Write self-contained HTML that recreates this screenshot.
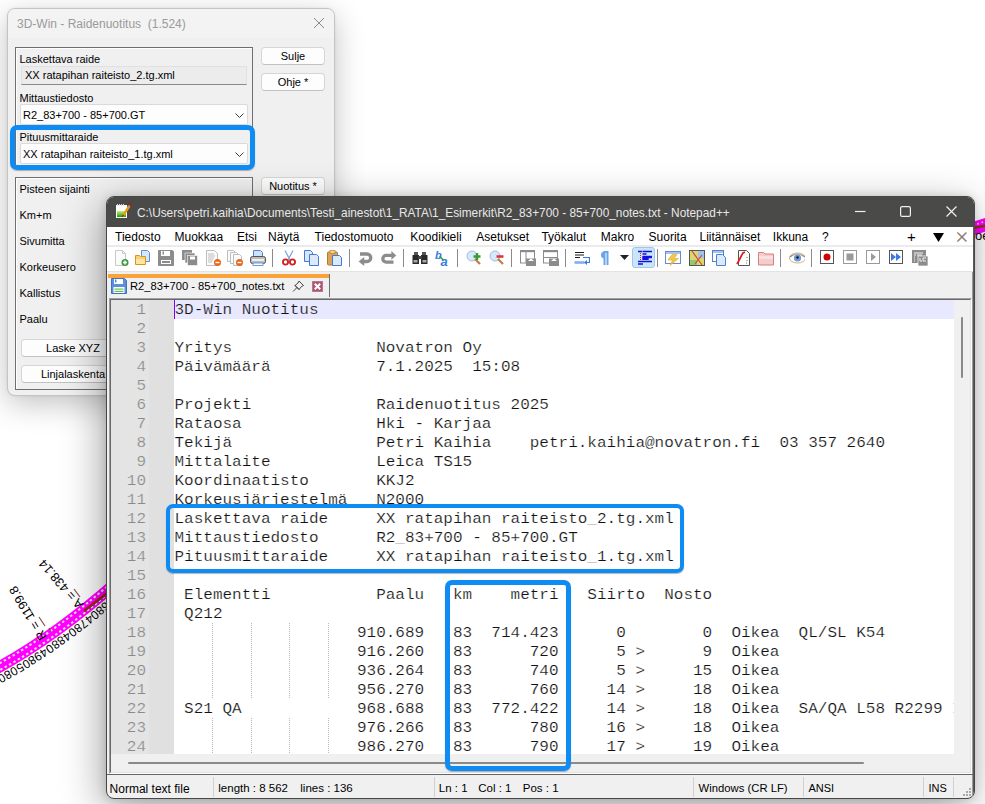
<!DOCTYPE html><html><head><meta charset="utf-8"><style>
*{box-sizing:border-box;margin:0;padding:0}
html,body{width:985px;height:804px;overflow:hidden;background:#fff}
body{position:relative;font-family:"Liberation Sans",sans-serif;}
.a{position:absolute}
.t{position:absolute;white-space:pre;line-height:1}
.mono{font-family:"Liberation Mono",monospace;transform:scaleY(0.88);transform-origin:0 12.3px}
</style></head><body><svg class="a" style="left:0;top:0" width="985" height="804" viewBox="0 0 985 804">
<defs><path id="crv" d="M118 581 Q50 641 -12 673"/></defs>
<path d="M-12 673 Q50 641 118 581" stroke="#ff00ff" stroke-width="11.5" fill="none"/>
<path d="M-12 673 Q50 641 118 581" transform="translate(-1.5,-2.6)" stroke="#fff" stroke-width="2" stroke-dasharray="2.5 2.5" fill="none" opacity="0.85"/>
<path d="M-12 673 Q50 641 118 581" transform="translate(1.5,2.6)" stroke="#fff" stroke-width="2" stroke-dasharray="2.5 2.5" stroke-dashoffset="2.5" fill="none" opacity="0.85"/>
<path d="M84 611 L110 591" stroke="#d01010" stroke-width="2.6" fill="none"/>
<path d="M85 611 L110 592" stroke="#207020" stroke-width="1" fill="none"/>
<g transform="translate(3.5,6)"><text font-family="Liberation Sans" font-size="12" fill="#000" letter-spacing="0.3"><textPath href="#crv" startOffset="0">80468047804880498050805180</textPath></text></g>
<g font-family="Liberation Sans" font-size="12.5" fill="#000">
<text transform="translate(47,637) rotate(-121)">R = 1199.8</text>
<text transform="translate(84,604) rotate(-131)">A = 438.14</text>
</g>
<path d="M39 617 L45 626 M49 628 L51 632" stroke="#8a4a4a" stroke-width="1.2"/>
<path d="M74 589 L80 597" stroke="#8a4a4a" stroke-width="1.2"/>
<path d="M970 230 Q980 226 995 222" stroke="#ff00ff" stroke-width="13" fill="none"/>
<path d="M970 230 Q980 226 995 222" transform="translate(-1,-3)" stroke="#fff" stroke-width="1.5" stroke-dasharray="1.5 3" fill="none" opacity="0.9"/>
<path d="M970 228.5 L995 224" stroke="#d01010" stroke-width="2.4" fill="none"/>
<path d="M970 228.5 L995 224" stroke="#207020" stroke-width="0.9" fill="none"/>
<text x="975" y="240" font-family="Liberation Sans" font-size="13" fill="#000">oe</text>
</svg>
<div class="a" style="left:7px;top:8px;width:328px;height:388px;border:1px solid #c4c4c4;border-radius:8px;background:#f0f0f0;box-shadow:0 8px 30px rgba(0,0,0,0.24), 0 0 3px rgba(0,0,0,0.08)"></div>
<div class="a" style="left:8px;top:9px;width:326px;height:29px;border-radius:7px 7px 0 0;background:#f3f3f3"></div>
<div class="t" style="left:17px;top:18px;font-size:12px;color:#9a9a9a">3D-Win - Raidenuotitus  (1.524)</div>
<svg class="a" style="left:313px;top:17px" width="12" height="12"><path d="M1 1L11 11M11 1L1 11" stroke="#8a8a8a" stroke-width="1"/></svg>
<div class="a" style="left:15px;top:47px;width:238px;height:121px;border:1px solid #6e6e6e;box-shadow:inset 1px 1px 0 #fff"></div>
<div class="a" style="left:15px;top:177px;width:238px;height:213px;border:1px solid #6e6e6e;box-shadow:inset 1px 1px 0 #fff"></div>
<div class="t" style="left:19.5px;top:54px;font-size:11px;color:#000">Laskettava raide</div>
<div class="a" style="left:21px;top:66px;width:226px;height:19px;background:#ececec;border:1px solid #e0e0e0;border-bottom:1px solid #8a8a8a"></div>
<div class="t" style="left:25px;top:70px;font-size:11px;color:#000">XX ratapihan raiteisto_2.tg.xml</div>
<div class="t" style="left:19.5px;top:93px;font-size:11px;color:#000">Mittaustiedosto</div>
<div class="a" style="left:20px;top:104px;width:228px;height:20.5px;background:#fdfdfd;border:1px solid #dadada;border-radius:2px"></div>
<div class="t" style="left:23px;top:109.5px;font-size:11px;color:#000">R2_83+700 - 85+700.GT</div>
<svg class="a" style="left:235px;top:112.5px" width="9" height="6"><path d="M0.5 0.5L4.5 4.5L8.5 0.5" stroke="#404040" stroke-width="1" fill="none"/></svg>
<div class="t" style="left:19.5px;top:132px;font-size:11px;color:#000">Pituusmittaraide</div>
<div class="a" style="left:20px;top:143px;width:228px;height:20.5px;background:#fdfdfd;border:1px solid #dadada;border-radius:2px"></div>
<div class="t" style="left:23px;top:148.5px;font-size:11px;color:#000">XX ratapihan raiteisto_1.tg.xml</div>
<svg class="a" style="left:235px;top:151.5px" width="9" height="6"><path d="M0.5 0.5L4.5 4.5L8.5 0.5" stroke="#404040" stroke-width="1" fill="none"/></svg>
<div class="a" style="left:261px;top:47px;width:64px;height:18px;background:#fdfdfd;border:1px solid #d6d6d6;border-bottom-color:#c2c2c2;border-radius:4px;font-size:11px;text-align:center;line-height:16px;white-space:pre">Sulje</div>
<div class="a" style="left:261px;top:73px;width:64px;height:18px;background:#fdfdfd;border:1px solid #d6d6d6;border-bottom-color:#c2c2c2;border-radius:4px;font-size:11px;text-align:center;line-height:16px;white-space:pre">Ohje *</div>
<div class="a" style="left:261px;top:177px;width:64px;height:18px;background:#fdfdfd;border:1px solid #d6d6d6;border-bottom-color:#c2c2c2;border-radius:4px;font-size:11px;text-align:center;line-height:16px;white-space:pre">Nuotitus *</div>
<div class="a" style="left:21px;top:339px;width:104px;height:18px;background:#fdfdfd;border:1px solid #d6d6d6;border-bottom-color:#c2c2c2;border-radius:4px;font-size:11px;text-align:center;line-height:16px;white-space:pre">Laske XYZ</div>
<div class="a" style="left:21px;top:365px;width:104px;height:18px;background:#fdfdfd;border:1px solid #d6d6d6;border-bottom-color:#c2c2c2;border-radius:4px;font-size:11px;text-align:center;line-height:16px;white-space:pre">Linjalaskenta</div>
<div class="t" style="left:19.5px;top:184px;font-size:11px;color:#000">Pisteen sijainti</div>
<div class="t" style="left:19.5px;top:210px;font-size:11px;color:#000">Km+m</div>
<div class="t" style="left:19.5px;top:236px;font-size:11px;color:#000">Sivumitta</div>
<div class="t" style="left:19.5px;top:262px;font-size:11px;color:#000">Korkeusero</div>
<div class="t" style="left:19.5px;top:288px;font-size:11px;color:#000">Kallistus</div>
<div class="t" style="left:19.5px;top:314px;font-size:11px;color:#000">Paalu</div>
<div class="a" style="left:10px;top:125px;width:245px;height:45px;border:5px solid #0f8cf4;border-radius:7px;box-shadow:0 1px 1px rgba(80,40,20,0.35)"></div>
<div class="a" style="left:106px;top:196px;width:869px;height:603px;border-radius:8px;background:#f0f0f0;border:1px solid #474747;box-shadow:-4px 10px 40px rgba(0,0,0,0.36), -1px 0 8px rgba(0,0,0,0.12);overflow:hidden">
<div class="a" style="left:0;top:0;width:100%;height:30px;background:#4a4a48"></div>
<div class="a" style="left:865px;top:30px;width:2px;height:570px;background:linear-gradient(90deg,#9a9a9a 50%,#5a5a5a 50%)"></div>
</div>
<svg class="a" style="left:115px;top:203px" width="17" height="16" viewBox="0 0 17 16">
<defs><linearGradient id="gg" x1="0" y1="0" x2="0" y2="1"><stop offset="0" stop-color="#c8f070"/><stop offset="1" stop-color="#1a9a1a"/></linearGradient></defs>
<rect x="1" y="2" width="11" height="13" fill="#fff"/>
<rect x="2" y="8" width="9" height="6" fill="url(#gg)"/>
<path d="M2.5 1v2M4.5 1v2M6.5 1v2M8.5 1v2" stroke="#ddd" stroke-width="1"/>
<path d="M7.5 13.5 L14 3.5" stroke="#e8a010" stroke-width="2.4"/>
<path d="M7.2 13.8 L8.5 11.8" stroke="#604010" stroke-width="1.5"/>
<path d="M14 3.5 L15 2" stroke="#a0b0c0" stroke-width="2"/>
<circle cx="15.2" cy="1.6" r="1.3" fill="#c01010"/>
</svg>
<div class="t" style="left:137px;top:207.5px;font-size:11.85px;color:#e8e8e8">C:\Users\petri.kaihia\Documents\Testi_ainestot\1_RATA\1_Esimerkit\R2_83+700 - 85+700_notes.txt - Notepad++</div>
<svg class="a" style="left:854.5px;top:205px" width="12" height="12"><path d="M0 6.5H10.5" stroke="#f0f0f0" stroke-width="1.2"/></svg>
<svg class="a" style="left:899.5px;top:205.5px" width="12" height="12"><rect x="0.6" y="0.6" width="9.8" height="9.8" rx="1.5" fill="none" stroke="#f0f0f0" stroke-width="1.2"/></svg>
<svg class="a" style="left:945.5px;top:205.5px" width="12" height="12"><path d="M0.5 0.5L10.5 10.5M10.5 0.5L0.5 10.5" stroke="#f0f0f0" stroke-width="1.2"/></svg>
<div class="a" style="left:107px;top:227px;width:866px;height:18px;background:#fff"></div>
<div class="a" style="left:107px;top:245px;width:866px;height:2px;background:#ebebeb"></div>
<div class="t" style="left:115px;top:231.2px;font-size:12px;color:#000">Tiedosto</div>
<div class="t" style="left:174.5px;top:231.2px;font-size:12px;color:#000">Muokkaa</div>
<div class="t" style="left:237px;top:231.2px;font-size:12px;color:#000">Etsi</div>
<div class="t" style="left:268px;top:231.2px;font-size:12px;color:#000">Näytä</div>
<div class="t" style="left:314.6px;top:231.2px;font-size:12px;color:#000">Tiedostomuoto</div>
<div class="t" style="left:410.2px;top:231.2px;font-size:12px;color:#000">Koodikieli</div>
<div class="t" style="left:476.3px;top:231.2px;font-size:12px;color:#000">Asetukset</div>
<div class="t" style="left:541.4px;top:231.2px;font-size:12px;color:#000">Työkalut</div>
<div class="t" style="left:600.8px;top:231.2px;font-size:12px;color:#000">Makro</div>
<div class="t" style="left:648.6px;top:231.2px;font-size:12px;color:#000">Suorita</div>
<div class="t" style="left:699.5px;top:231.2px;font-size:12px;color:#000">Liitännäiset</div>
<div class="t" style="left:772.8px;top:231.2px;font-size:12px;color:#000">Ikkuna</div>
<div class="t" style="left:821.9px;top:231.2px;font-size:12px;color:#000">?</div>
<div class="t" style="left:907px;top:229px;font-size:15px;color:#000">+</div>
<svg class="a" style="left:933px;top:233px" width="11" height="9"><path d="M0 0H11L5.5 9Z" fill="#000"/></svg>
<svg class="a" style="left:957px;top:232px" width="10" height="10"><path d="M0.5 0.5L9.5 9.5M9.5 0.5L0.5 9.5" stroke="#d89040" stroke-width="1.1" transform="translate(-0.4,0)"/><path d="M0.5 0.5L9.5 9.5M9.5 0.5L0.5 9.5" stroke="#3a6ac0" stroke-width="0.9" transform="translate(0.4,0)"/></svg>
<div class="a" style="left:107px;top:247px;width:866px;height:24px;background:#fff"></div>
<div class="a" style="left:107px;top:271px;width:866px;height:1px;background:#e3e3e3"></div>
<div class="a" style="left:632px;top:247px;width:23px;height:21px;background:#cce4f7;border:1px solid #99c9ef;border-radius:3px"></div>
<svg class="a" style="left:113px;top:250px" width="16" height="16" viewBox="0 0 16 16"><path d="M2.5 0.5h7l3 3v12h-10z" fill="#fbfbfb" stroke="#c9c9c9"/><path d="M9.5 0.5v3h3" fill="none" stroke="#c9c9c9"/><circle cx="12" cy="12.5" r="3.5" fill="#3c9a3c"/><path d="M12 10.5v4M10 12.5h4" stroke="#fff" stroke-width="1.4"/></svg>
<svg class="a" style="left:135px;top:250px" width="16" height="16" viewBox="0 0 16 16"><path d="M6.5 0.5h6l2 2v9h-8z" fill="#d6e6fb" stroke="#5b8fd8"/><path d="M0.5 5.5h4l1 1h5v8h-10z" fill="#f7d27a" stroke="#e09020"/><rect x="1" y="9" width="9" height="5" fill="#fbe6a0"/></svg>
<svg class="a" style="left:158px;top:250px" width="16" height="16" viewBox="0 0 16 16"><path d="M0.5 0.5h14l1 1v14h-15z" fill="#8c8c8c" stroke="#8c8c8c"/><rect x="3" y="1" width="9" height="5" fill="#fff"/><rect x="4.5" y="1.5" width="1.5" height="3" fill="#8c8c8c"/><rect x="3" y="10" width="10" height="4" fill="#fff"/><rect x="4" y="11" width="8" height="2" fill="#8c8c8c"/></svg>
<svg class="a" style="left:181.5px;top:250px" width="16" height="16" viewBox="0 0 16 16"><rect x="0" y="0" width="10" height="10" fill="#8c8c8c"/><rect x="3" y="3" width="10" height="10" fill="#8c8c8c" stroke="#fff" stroke-width="0.6"/><rect x="5.5" y="5.5" width="10" height="10" fill="#8c8c8c" stroke="#fff" stroke-width="0.6"/><rect x="8" y="6.5" width="5" height="3" fill="#fff"/></svg>
<svg class="a" style="left:205px;top:250px" width="16" height="16" viewBox="0 0 16 16"><path d="M1.5 0.5h8l3 3v12h-11z" fill="#fbfbfb" stroke="#bdbdbd"/><path d="M3 4h6M3 6h7M3 8h6M3 10h5M3 12h4" stroke="#b0b0b0" stroke-width="0.8"/><circle cx="12.5" cy="12.5" r="3.5" fill="#e8671b"/><path d="M10.5 12.5h4" stroke="#fff" stroke-width="1.4"/></svg>
<svg class="a" style="left:227px;top:250px" width="16" height="16" viewBox="0 0 16 16"><path d="M0.5 0.5h6l2 2v9h-8z" fill="#fbfbfb" stroke="#bdbdbd"/><path d="M3.5 2.5h6l2 2v9h-8z" fill="#fbfbfb" stroke="#bdbdbd"/><path d="M6.5 4.5h6l2 2v9h-8z" fill="#fbfbfb" stroke="#bdbdbd"/><circle cx="12.5" cy="12.5" r="3.5" fill="#e8671b"/><path d="M10.5 12.5h4" stroke="#fff" stroke-width="1.4"/></svg>
<svg class="a" style="left:250px;top:250px" width="16" height="16" viewBox="0 0 16 16"><path d="M3.5 0.5h7l2 2v5h-9z" fill="#cfe2fb" stroke="#4a84d4"/><rect x="0.5" y="6.5" width="15" height="7" rx="2" fill="#bdbdbd" stroke="#555"/><rect x="2" y="9" width="12" height="2" fill="#eee"/><rect x="3" y="13" width="10" height="2.5" fill="#fff" stroke="#4a84d4" stroke-width="0.8"/></svg>
<svg class="a" style="left:281px;top:250px" width="16" height="16" viewBox="0 0 16 16"><path d="M7 10L12 0.5M9 10L4 0.5" stroke="#7ea7e0" stroke-width="1.3"/><circle cx="4.5" cy="12" r="2.6" fill="none" stroke="#d02020" stroke-width="1.8"/><circle cx="11.5" cy="12" r="2.6" fill="none" stroke="#d02020" stroke-width="1.8"/></svg>
<svg class="a" style="left:304px;top:250px" width="16" height="16" viewBox="0 0 16 16"><path d="M0.5 0.5h6l2 2v9h-8z" fill="#d8e6fa" stroke="#3f7bd4"/><path d="M5.5 4.5h7l2 2v9h-9z" fill="#dce9fb" stroke="#3f7bd4"/></svg>
<svg class="a" style="left:327px;top:250px" width="16" height="16" viewBox="0 0 16 16"><rect x="0.5" y="2" width="10" height="13" rx="1" fill="#d9a35a" stroke="#b57a30"/><rect x="3" y="0.5" width="5" height="3" fill="#f0d080" stroke="#b57a30" stroke-width="0.6"/><path d="M5.5 5.5h7l2 2v8h-9z" fill="#dce9fb" stroke="#3f7bd4"/></svg>
<svg class="a" style="left:358px;top:250px" width="16" height="16" viewBox="0 0 16 16"><path d="M2 4H9A3.75 3.75 0 0 1 9 11.5H5.5" fill="none" stroke="#8c8c8c" stroke-width="3.3"/><path d="M0.6 11.5L6.2 7V16Z" fill="#8c8c8c"/></svg>
<svg class="a" style="left:381px;top:250px" width="16" height="16" viewBox="0 0 16 16"><path d="M11 5.4H5.2A3.4 3.4 0 0 0 5.2 12.2H12.5" fill="none" stroke="#8c8c8c" stroke-width="3.3"/><path d="M15.2 5.4L10.4 1V9.8Z" fill="#8c8c8c"/></svg>
<svg class="a" style="left:412px;top:250px" width="16" height="16" viewBox="0 0 16 16"><path d="M2 2h4v3h-4zM10 2h4v3h-4z" fill="#555"/><path d="M0.5 5h6.5v9h-6.5zM9 5h6.5v9h-6.5z" fill="#2a2a2a"/><rect x="6" y="6" width="4" height="3" fill="#444"/><rect x="1.5" y="10" width="4" height="2.5" fill="#a8a8a8"/><rect x="10.5" y="10" width="4" height="2.5" fill="#a8a8a8"/></svg>
<svg class="a" style="left:435px;top:250px" width="16" height="16" viewBox="0 0 16 16"><text x="0" y="9" font-family="Liberation Sans" font-style="italic" font-weight="bold" font-size="11" fill="#3b7be0">b</text><text x="5.5" y="15.5" font-family="Liberation Sans" font-style="italic" font-weight="bold" font-size="13" fill="#3b7be0">a</text><path d="M4.5 6.5L8.5 10" stroke="#2a9a3a" stroke-width="1.6"/></svg>
<svg class="a" style="left:466px;top:250px" width="16" height="16" viewBox="0 0 16 16"><circle cx="6" cy="6" r="5" fill="#d8e8fa" stroke="#9cbde6"/><path d="M9 9L14 14" stroke="#c08040" stroke-width="2.2"/><path d="M11 3v7M7.5 6.5h7" stroke="#3a9a3a" stroke-width="2.5"/></svg>
<svg class="a" style="left:489px;top:250px" width="16" height="16" viewBox="0 0 16 16"><circle cx="6" cy="6" r="5" fill="#d8e8fa" stroke="#9cbde6"/><path d="M9 9L14 14" stroke="#c08040" stroke-width="2.2"/><path d="M7.5 6.5h7" stroke="#e03030" stroke-width="2.5"/></svg>
<svg class="a" style="left:520px;top:250px" width="16" height="16" viewBox="0 0 16 16"><rect x="0.5" y="0.5" width="14" height="12.5" fill="#fff" stroke="#8c8c8c"/><rect x="0" y="0" width="15" height="2.2" fill="#8c8c8c"/><path d="M6 2v11" stroke="#8c8c8c"/><rect x="6" y="8.5" width="10" height="7.5" fill="#8c8c8c"/><path d="M8 11L11 8.5L14 11Z" fill="#fff"/></svg>
<svg class="a" style="left:543px;top:250px" width="16" height="16" viewBox="0 0 16 16"><rect x="0.5" y="0.5" width="14" height="12.5" fill="#fff" stroke="#8c8c8c"/><rect x="0" y="0" width="15" height="2.2" fill="#8c8c8c"/><path d="M0.5 7.5h14" stroke="#8c8c8c"/><rect x="6" y="8.5" width="10" height="7.5" fill="#8c8c8c"/><path d="M8 11L11 8.5L14 11Z" fill="#fff"/></svg>
<svg class="a" style="left:574px;top:250px" width="16" height="16" viewBox="0 0 16 16"><path d="M1 2.5h9M1 5h9M1 7.5h5" stroke="#1a1a1a" stroke-width="1"/><path d="M0.5 12.5h10" stroke="#7fb0f0" stroke-width="2.6"/><path d="M9 7.5h6.5v5h-4" fill="none" stroke="#3b7be0" stroke-width="1.2"/><path d="M10 12.5L13 10V15Z" fill="#3b7be0"/></svg>
<svg class="a" style="left:595.5px;top:250px" width="16" height="16" viewBox="0 0 16 16"><path d="M7.5 2h5M8.5 2v13M11.5 2v13" stroke="#6aa4ee" stroke-width="2" fill="none"/><path d="M8.5 1.5A3.3 3.3 0 0 0 8.5 8.5Z" fill="#6aa4ee"/></svg>
<svg class="a" style="left:637px;top:250px" width="16" height="16" viewBox="0 0 16 16"><path d="M1 1.5h4M5.5 1.5h9.5M5.5 4h4M5.5 7h9.5M5.5 9h6M1 11.5h14M1 14h5" stroke="#1010e0" stroke-width="1.6"/><path d="M3.5 3v8" stroke="#e02020" stroke-width="1" stroke-dasharray="1 1"/><rect x="5.5" y="5.8" width="9.5" height="2.4" fill="#1010e0"/><rect x="5.5" y="8" width="6" height="2" fill="#1010e0"/></svg>
<svg class="a" style="left:665px;top:250px" width="16" height="16" viewBox="0 0 16 16"><rect x="0.5" y="1.5" width="15" height="12" fill="#fff" stroke="#6a8ccc"/><rect x="1" y="2" width="14" height="2" fill="#a8c4ec"/><path d="M7 4.5L3 10h4.5l-2.5 5.5l8.5-7h-4.5l3-4z" fill="#f2c84a" stroke="#d8a020" stroke-width="0.5"/></svg>
<svg class="a" style="left:689px;top:250px" width="16" height="16" viewBox="0 0 16 16"><rect x="0.5" y="0.5" width="15" height="15" fill="#d8d870" stroke="#555"/><path d="M9 1h6v7h-6z" fill="#9cc4ec"/><path d="M1 10h7v5h-7z" fill="#8fc870"/><path d="M3 1L13 15M13 5L6 14" stroke="#e04040" stroke-width="1.2"/></svg>
<svg class="a" style="left:712px;top:250px" width="16" height="16" viewBox="0 0 16 16"><rect x="0.5" y="0.5" width="11" height="11" fill="#fff" stroke="#4a84d4"/><rect x="1" y="1" width="10" height="2" fill="#a8c4ec"/><path d="M4.5 4.5h6l3 3v8h-9z" fill="#dce9fb" stroke="#4a84d4"/></svg>
<svg class="a" style="left:736px;top:250px" width="16" height="16" viewBox="0 0 16 16"><path d="M2.5 0.5h8l3 3v12h-11z" fill="#fff" stroke="#555"/><path d="M1 14C4 9 5 6 7 3l2-1" stroke="#e02020" stroke-width="1.8" fill="none"/><path d="M11 7v1M11 10v1M10 13h1" stroke="#3a9a3a" stroke-width="1"/></svg>
<svg class="a" style="left:758px;top:250px" width="16" height="16" viewBox="0 0 16 16"><path d="M0.5 2.5h5l1.5 1.5h8.5v11h-15z" fill="#f4cccc" stroke="#d88080"/><rect x="1" y="6" width="14" height="3" fill="#f8e0e0"/></svg>
<svg class="a" style="left:789px;top:250px" width="16" height="16" viewBox="0 0 16 16"><ellipse cx="8.5" cy="8" rx="8" ry="5" fill="#fff" stroke="#d8b070" stroke-width="1"/><path d="M1 7Q8 1 16 7" stroke="#909090" stroke-width="1.2" fill="none"/><circle cx="8.5" cy="8" r="3.6" fill="#6a9ad8"/><circle cx="8.5" cy="7.5" r="1.2" fill="#111"/></svg>
<svg class="a" style="left:820px;top:250px" width="16" height="16" viewBox="0 0 16 16"><rect x="0.5" y="0.5" width="13" height="13" fill="#fff" stroke="#555"/><circle cx="7" cy="7" r="3.5" fill="#d00000"/></svg>
<svg class="a" style="left:843px;top:250px" width="16" height="16" viewBox="0 0 16 16"><rect x="0.5" y="0.5" width="13" height="13" fill="#fff" stroke="#999"/><rect x="3.5" y="3.5" width="7" height="7" fill="#9a9a9a"/></svg>
<svg class="a" style="left:866px;top:250px" width="16" height="16" viewBox="0 0 16 16"><rect x="0.5" y="0.5" width="13" height="13" fill="#fff" stroke="#999"/><path d="M5 3L10 7L5 11Z" fill="#9a9a9a"/></svg>
<svg class="a" style="left:889px;top:250px" width="16" height="16" viewBox="0 0 16 16"><rect x="0.5" y="0.5" width="13" height="13" fill="#fff" stroke="#555"/><path d="M2 3L7 7L2 11ZM7 3L12 7L7 11Z" fill="#3b7be0"/></svg>
<svg class="a" style="left:912px;top:250px" width="16" height="16" viewBox="0 0 16 16"><rect x="0" y="0" width="14" height="13" fill="#8c8c8c"/><path d="M2 3h9M2 5h2M5 5h5M2 7h1M2 9h1M2 11h1" stroke="#fff" stroke-width="0.9"/><rect x="6" y="6" width="10" height="10" fill="#8c8c8c" stroke="#fff" stroke-width="0.7"/><path d="M8 8v3h2M11 8h3M11 8v3h3" stroke="#fff" stroke-width="0.9" fill="none"/></svg>
<div class="a" style="left:272px;top:249px;width:1px;height:18px;background:#8a8a8a"></div>
<div class="a" style="left:349px;top:249px;width:1px;height:18px;background:#8a8a8a"></div>
<div class="a" style="left:403px;top:249px;width:1px;height:18px;background:#8a8a8a"></div>
<div class="a" style="left:457px;top:249px;width:1px;height:18px;background:#8a8a8a"></div>
<div class="a" style="left:511px;top:249px;width:1px;height:18px;background:#8a8a8a"></div>
<div class="a" style="left:565px;top:249px;width:1px;height:18px;background:#8a8a8a"></div>
<div class="a" style="left:657px;top:249px;width:1px;height:18px;background:#8a8a8a"></div>
<div class="a" style="left:780px;top:249px;width:1px;height:18px;background:#8a8a8a"></div>
<div class="a" style="left:811px;top:249px;width:1px;height:18px;background:#8a8a8a"></div>
<svg class="a" style="left:620px;top:255px" width="9" height="6"><path d="M0 0H9L4.5 5Z" fill="#222"/></svg>
<div class="a" style="left:108px;top:274px;width:222px;height:23px;background:#f0f0f0;border-right:1px solid #6e6e6e"></div>
<div class="a" style="left:108px;top:274px;width:221px;height:4px;background:#f9a33b"></div>
<svg class="a" style="left:111px;top:278px" width="16" height="16" viewBox="0 0 16 16">
<path d="M0.5 0.5h13l2 2v13h-15z" fill="#5b8fd8" stroke="#3f72c4"/>
<rect x="3" y="1" width="9" height="5" fill="#fff"/><rect x="4" y="1.5" width="1.5" height="3" fill="#5b8fd8"/>
<rect x="2.5" y="9" width="11" height="6" fill="#fff"/><rect x="3.5" y="10.5" width="9" height="1.2" fill="#6cc04a"/><rect x="3.5" y="12.8" width="9" height="1.2" fill="#6cc04a"/>
</svg>
<div class="t" style="left:130px;top:281px;font-size:11.2px;color:#000">R2_83+700 - 85+700_notes.txt</div>
<svg class="a" style="left:292px;top:280px" width="13" height="13" viewBox="0 0 13 13"><path d="M7 1L11.5 5.5L9.5 6.5L7 9.5L3 5.5L6 3Z" stroke="#333" stroke-width="0.9" fill="none"/><path d="M2.8 5.3L7.2 9.7M4.8 7.7L1 11.5" stroke="#333" stroke-width="0.9"/></svg>
<svg class="a" style="left:312px;top:281px" width="11" height="11" viewBox="0 0 11 11"><rect x="0" y="0" width="11" height="11" fill="#b88ab0"/><rect x="0.6" y="0.6" width="9.8" height="9.8" fill="#b05474"/><path d="M2.8 2.8L8.2 8.2M8.2 2.8L2.8 8.2" stroke="#fff" stroke-width="2"/></svg>
<div class="a" style="left:109px;top:298px;width:863px;height:476px;background:#fff;border-top:1px solid #a0a0a0;border-left:1px solid #a0a0a0;border-right:1px solid #fff;border-bottom:1px solid #fff"></div>
<div class="a" style="left:110px;top:299px;width:861px;height:474px;background:#fff;border-top:1px solid #696969;border-left:1px solid #696969;border-right:1px solid #e3e3e3;border-bottom:1px solid #e3e3e3"></div>
<div class="a" style="left:111px;top:300px;width:38px;height:454px;background:#e4e4e4"></div>
<div class="a" style="left:149px;top:300px;width:25px;height:454px;background:#e0e0e0"></div>
<div class="a" style="left:954px;top:300px;width:16px;height:472px;background:#f0f0f0"></div>
<div class="a" style="left:961px;top:317px;width:2px;height:61px;background:#8a8a8a;border-radius:1px"></div>
<div class="a" style="left:111px;top:754px;width:843px;height:18px;background:#f0f0f0"></div>
<div class="a" style="left:128px;top:762px;width:736px;height:2px;background:#8a8a8a;border-radius:1px"></div>
<div class="a" style="left:174px;top:300px;width:779.5px;height:19px;background:#e8e8ff"></div>
<div class="a" style="left:174px;top:300px;width:1px;height:19px;background:#8000ff"></div>
<div class="a" style="left:111px;top:300px;width:842.5px;height:454px;overflow:hidden">
<div class="a" style="left:101.4px;top:323px;width:1px;height:76px;background-image:linear-gradient(#b8b8b8 50%,transparent 50%);background-size:1px 2px"></div>
<div class="a" style="left:139.8px;top:323px;width:1px;height:76px;background-image:linear-gradient(#b8b8b8 50%,transparent 50%);background-size:1px 2px"></div>
<div class="a" style="left:178.2px;top:323px;width:1px;height:76px;background-image:linear-gradient(#b8b8b8 50%,transparent 50%);background-size:1px 2px"></div>
<div class="a" style="left:216.6px;top:323px;width:1px;height:76px;background-image:linear-gradient(#b8b8b8 50%,transparent 50%);background-size:1px 2px"></div>
<div class="a" style="left:101.4px;top:418px;width:1px;height:38px;background-image:linear-gradient(#b8b8b8 50%,transparent 50%);background-size:1px 2px"></div>
<div class="a" style="left:139.8px;top:418px;width:1px;height:38px;background-image:linear-gradient(#b8b8b8 50%,transparent 50%);background-size:1px 2px"></div>
<div class="a" style="left:178.2px;top:418px;width:1px;height:38px;background-image:linear-gradient(#b8b8b8 50%,transparent 50%);background-size:1px 2px"></div>
<div class="a" style="left:216.6px;top:418px;width:1px;height:38px;background-image:linear-gradient(#b8b8b8 50%,transparent 50%);background-size:1px 2px"></div>
<div class="t mono" style="left:25.4px;top:1.8px;font-size:16px;color:#8a8a8a;-webkit-text-stroke:0.22px #e4e4e4">1</div>
<div class="t mono" style="left:63.5px;top:1.8px;font-size:16px;color:#111;-webkit-text-stroke:0.22px #e8e8ff">3D-Win Nuotitus</div>
<div class="t mono" style="left:25.4px;top:20.8px;font-size:16px;color:#8a8a8a;-webkit-text-stroke:0.22px #e4e4e4">2</div>
<div class="t mono" style="left:25.4px;top:39.8px;font-size:16px;color:#8a8a8a;-webkit-text-stroke:0.22px #e4e4e4">3</div>
<div class="t mono" style="left:63.5px;top:39.8px;font-size:16px;color:#111;-webkit-text-stroke:0.22px #fff">Yritys               Novatron Oy</div>
<div class="t mono" style="left:25.4px;top:58.8px;font-size:16px;color:#8a8a8a;-webkit-text-stroke:0.22px #e4e4e4">4</div>
<div class="t mono" style="left:63.5px;top:58.8px;font-size:16px;color:#111;-webkit-text-stroke:0.22px #fff">Päivämäärä           7.1.2025  15:08</div>
<div class="t mono" style="left:25.4px;top:77.8px;font-size:16px;color:#8a8a8a;-webkit-text-stroke:0.22px #e4e4e4">5</div>
<div class="t mono" style="left:25.4px;top:96.8px;font-size:16px;color:#8a8a8a;-webkit-text-stroke:0.22px #e4e4e4">6</div>
<div class="t mono" style="left:63.5px;top:96.8px;font-size:16px;color:#111;-webkit-text-stroke:0.22px #fff">Projekti             Raidenuotitus 2025</div>
<div class="t mono" style="left:25.4px;top:115.8px;font-size:16px;color:#8a8a8a;-webkit-text-stroke:0.22px #e4e4e4">7</div>
<div class="t mono" style="left:63.5px;top:115.8px;font-size:16px;color:#111;-webkit-text-stroke:0.22px #fff">Rataosa              Hki - Karjaa</div>
<div class="t mono" style="left:25.4px;top:134.8px;font-size:16px;color:#8a8a8a;-webkit-text-stroke:0.22px #e4e4e4">8</div>
<div class="t mono" style="left:63.5px;top:134.8px;font-size:16px;color:#111;-webkit-text-stroke:0.22px #fff">Tekijä               Petri Kaihia    petri.kaihia@novatron.fi  03 357 2640</div>
<div class="t mono" style="left:25.4px;top:153.8px;font-size:16px;color:#8a8a8a;-webkit-text-stroke:0.22px #e4e4e4">9</div>
<div class="t mono" style="left:63.5px;top:153.8px;font-size:16px;color:#111;-webkit-text-stroke:0.22px #fff">Mittalaite           Leica TS15</div>
<div class="t mono" style="left:15.8px;top:172.8px;font-size:16px;color:#8a8a8a;-webkit-text-stroke:0.22px #e4e4e4">10</div>
<div class="t mono" style="left:63.5px;top:172.8px;font-size:16px;color:#111;-webkit-text-stroke:0.22px #fff">Koordinaatisto       KKJ2</div>
<div class="t mono" style="left:15.8px;top:191.8px;font-size:16px;color:#8a8a8a;-webkit-text-stroke:0.22px #e4e4e4">11</div>
<div class="t mono" style="left:63.5px;top:191.8px;font-size:16px;color:#111;-webkit-text-stroke:0.22px #fff">Korkeusjärjestelmä   N2000</div>
<div class="t mono" style="left:15.8px;top:210.8px;font-size:16px;color:#8a8a8a;-webkit-text-stroke:0.22px #e4e4e4">12</div>
<div class="t mono" style="left:63.5px;top:210.8px;font-size:16px;color:#111;-webkit-text-stroke:0.22px #fff">Laskettava raide     XX ratapihan raiteisto_2.tg.xml</div>
<div class="t mono" style="left:15.8px;top:229.8px;font-size:16px;color:#8a8a8a;-webkit-text-stroke:0.22px #e4e4e4">13</div>
<div class="t mono" style="left:63.5px;top:229.8px;font-size:16px;color:#111;-webkit-text-stroke:0.22px #fff">Mittaustiedosto      R2_83+700 - 85+700.GT</div>
<div class="t mono" style="left:15.8px;top:248.8px;font-size:16px;color:#8a8a8a;-webkit-text-stroke:0.22px #e4e4e4">14</div>
<div class="t mono" style="left:63.5px;top:248.8px;font-size:16px;color:#111;-webkit-text-stroke:0.22px #fff">Pituusmittaraide     XX ratapihan raiteisto_1.tg.xml</div>
<div class="t mono" style="left:15.8px;top:267.8px;font-size:16px;color:#8a8a8a;-webkit-text-stroke:0.22px #e4e4e4">15</div>
<div class="t mono" style="left:15.8px;top:286.8px;font-size:16px;color:#8a8a8a;-webkit-text-stroke:0.22px #e4e4e4">16</div>
<div class="t mono" style="left:63.5px;top:286.8px;font-size:16px;color:#111;-webkit-text-stroke:0.22px #fff"> Elementti           Paalu   km    metri   Siirto  Nosto</div>
<div class="t mono" style="left:15.8px;top:305.8px;font-size:16px;color:#8a8a8a;-webkit-text-stroke:0.22px #e4e4e4">17</div>
<div class="t mono" style="left:63.5px;top:305.8px;font-size:16px;color:#111;-webkit-text-stroke:0.22px #fff"> Q212</div>
<div class="t mono" style="left:15.8px;top:324.8px;font-size:16px;color:#8a8a8a;-webkit-text-stroke:0.22px #e4e4e4">18</div>
<div class="t mono" style="left:63.5px;top:324.8px;font-size:16px;color:#111;-webkit-text-stroke:0.22px #fff">                   910.689   83  714.423      0        0  Oikea  QL/SL K54</div>
<div class="t mono" style="left:15.8px;top:343.8px;font-size:16px;color:#8a8a8a;-webkit-text-stroke:0.22px #e4e4e4">19</div>
<div class="t mono" style="left:63.5px;top:343.8px;font-size:16px;color:#111;-webkit-text-stroke:0.22px #fff">                   916.260   83      720      5 &gt;      9  Oikea</div>
<div class="t mono" style="left:15.8px;top:362.8px;font-size:16px;color:#8a8a8a;-webkit-text-stroke:0.22px #e4e4e4">20</div>
<div class="t mono" style="left:63.5px;top:362.8px;font-size:16px;color:#111;-webkit-text-stroke:0.22px #fff">                   936.264   83      740      5 &gt;     15  Oikea</div>
<div class="t mono" style="left:15.8px;top:381.8px;font-size:16px;color:#8a8a8a;-webkit-text-stroke:0.22px #e4e4e4">21</div>
<div class="t mono" style="left:63.5px;top:381.8px;font-size:16px;color:#111;-webkit-text-stroke:0.22px #fff">                   956.270   83      760     14 &gt;     18  Oikea</div>
<div class="t mono" style="left:15.8px;top:400.8px;font-size:16px;color:#8a8a8a;-webkit-text-stroke:0.22px #e4e4e4">22</div>
<div class="t mono" style="left:63.5px;top:400.8px;font-size:16px;color:#111;-webkit-text-stroke:0.22px #fff"> S21 QA            968.688   83  772.422     14 &gt;     18  Oikea  SA/QA L58 R2299 I</div>
<div class="t mono" style="left:15.8px;top:419.8px;font-size:16px;color:#8a8a8a;-webkit-text-stroke:0.22px #e4e4e4">23</div>
<div class="t mono" style="left:63.5px;top:419.8px;font-size:16px;color:#111;-webkit-text-stroke:0.22px #fff">                   976.266   83      780     16 &gt;     18  Oikea</div>
<div class="t mono" style="left:15.8px;top:438.8px;font-size:16px;color:#8a8a8a;-webkit-text-stroke:0.22px #e4e4e4">24</div>
<div class="t mono" style="left:63.5px;top:438.8px;font-size:16px;color:#111;-webkit-text-stroke:0.22px #fff">                   986.270   83      790     17 &gt;     19  Oikea</div>
</div>
<div class="a" style="left:166px;top:504px;width:518px;height:69px;border:4.5px solid #0f8cf4;border-radius:7px;box-shadow:0 1px 1px rgba(80,40,20,0.35)"></div>
<div class="a" style="left:445px;top:580px;width:126px;height:191px;border:5px solid #0f8cf4;border-radius:7px;box-shadow:0 1px 1px rgba(80,40,20,0.35)"></div>
<div class="a" style="left:107px;top:774px;width:866px;height:1px;background:#646464"></div>
<div class="t" style="left:109.6px;top:783px;font-size:12px;color:#000">Normal text file</div>
<div class="t" style="left:218.3px;top:783px;font-size:11.5px;color:#000">length : 8 562</div>
<div class="t" style="left:300.3px;top:783px;font-size:11.5px;color:#000">lines : 136</div>
<div class="t" style="left:438.8px;top:783px;font-size:11.5px;color:#000">Ln : 1</div>
<div class="t" style="left:478.2px;top:783px;font-size:11.5px;color:#000">Col : 1</div>
<div class="t" style="left:522.8px;top:783px;font-size:11.5px;color:#000">Pos : 1</div>
<div class="t" style="left:698.5px;top:783px;font-size:11.3px;color:#000">Windows (CR LF)</div>
<div class="t" style="left:808.4px;top:783px;font-size:11px;color:#000">ANSI</div>
<div class="t" style="left:928.4px;top:783px;font-size:11px;color:#000">INS</div>
<div class="a" style="left:213px;top:777px;width:1px;height:20px;background:#d0d0d0"></div>
<div class="a" style="left:434px;top:777px;width:1px;height:20px;background:#d0d0d0"></div>
<div class="a" style="left:693px;top:777px;width:1px;height:20px;background:#d0d0d0"></div>
<div class="a" style="left:803px;top:777px;width:1px;height:20px;background:#d0d0d0"></div>
<div class="a" style="left:923px;top:777px;width:1px;height:20px;background:#d0d0d0"></div>
<div class="a" style="left:953px;top:777px;width:1px;height:20px;background:#d0d0d0"></div>
<div class="a" style="left:969px;top:788px;width:2px;height:2px;background:#a8a8a8"></div>
<div class="a" style="left:966px;top:791px;width:2px;height:2px;background:#a8a8a8"></div>
<div class="a" style="left:969px;top:791px;width:2px;height:2px;background:#a8a8a8"></div>
<div class="a" style="left:963px;top:794px;width:2px;height:2px;background:#a8a8a8"></div>
<div class="a" style="left:966px;top:794px;width:2px;height:2px;background:#a8a8a8"></div>
<div class="a" style="left:969px;top:794px;width:2px;height:2px;background:#a8a8a8"></div></body></html>
